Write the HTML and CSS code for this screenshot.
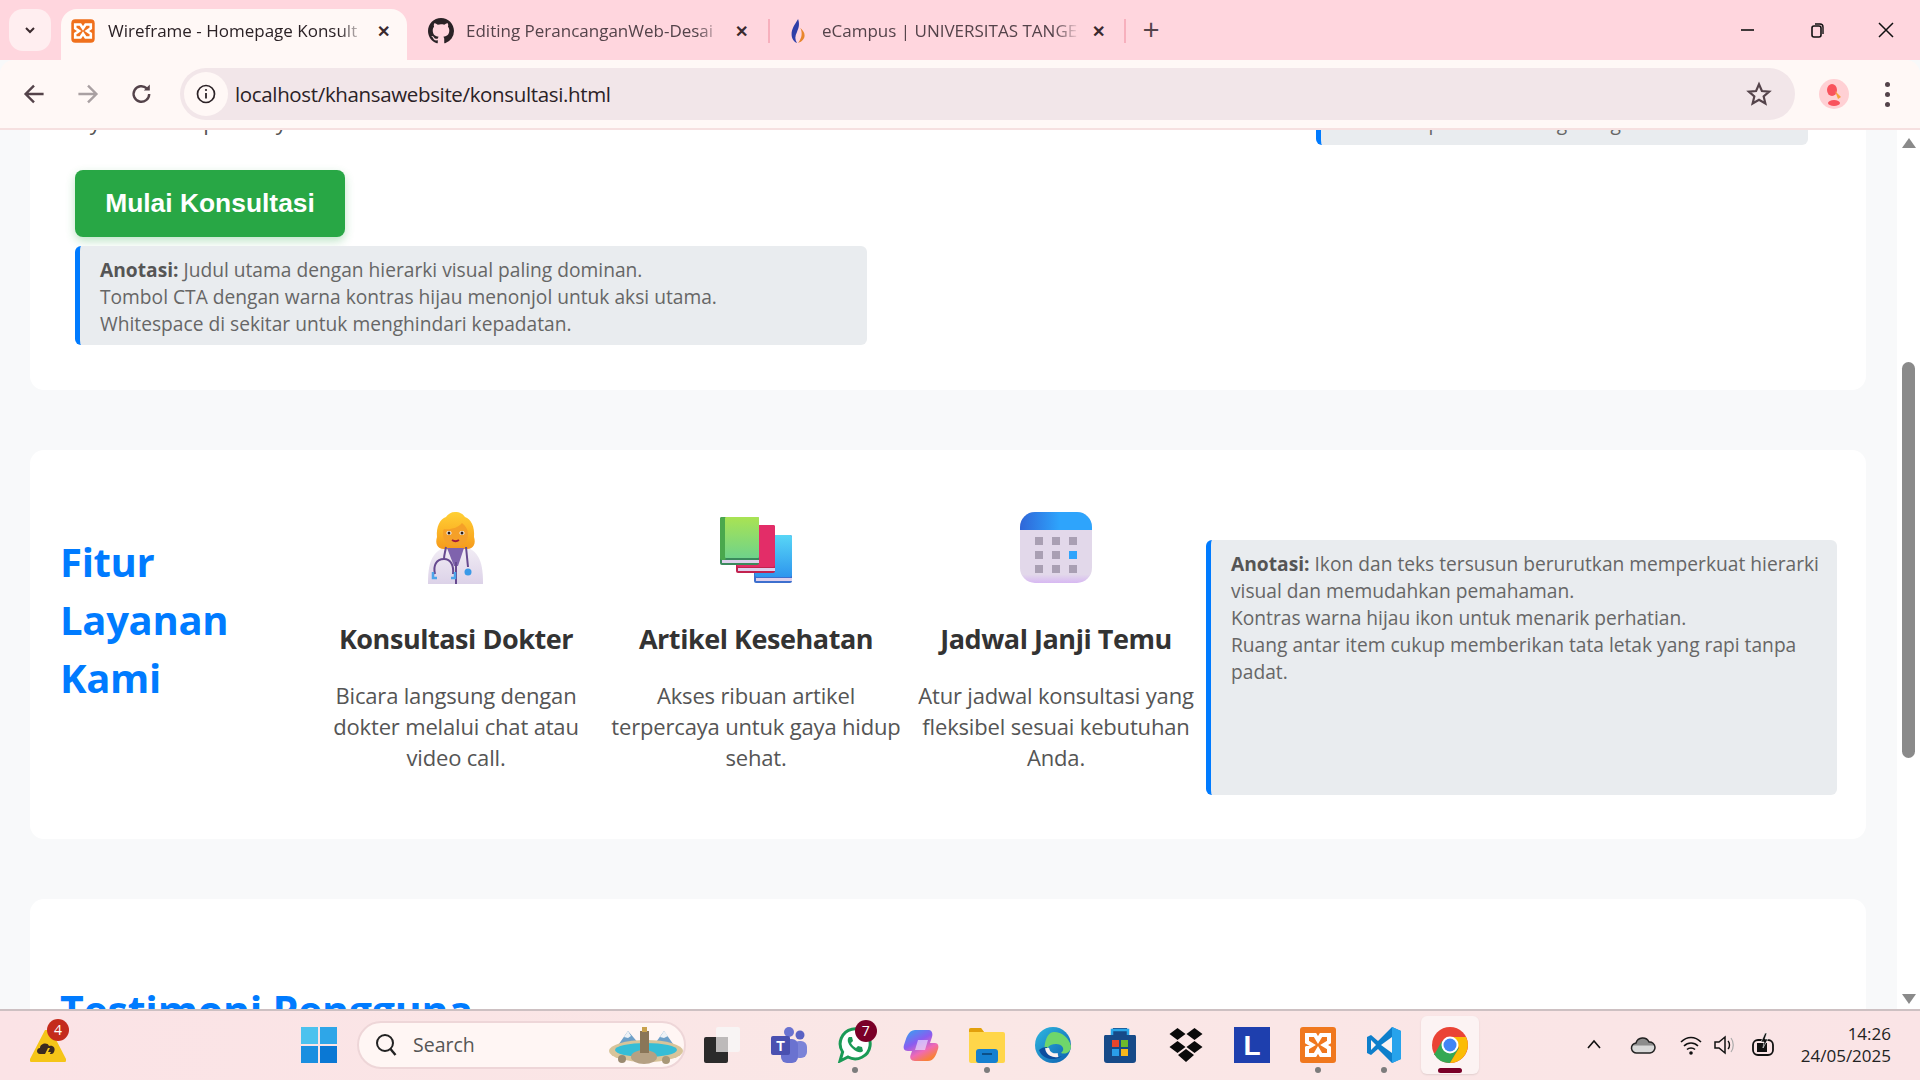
FILE: index.html
```html
<!DOCTYPE html>
<html lang="id">
<head>
  <meta charset="UTF-8">
  <title>Wireframe - Homepage Konsultasi</title>
  <link rel="stylesheet" href="styles.css">
</head>
<body>

<div class="tabstrip">
  <div class="tab-search"><svg width="14" height="14" viewBox="0 0 14 14"><path d="M3 5l4 4 4-4" fill="none" stroke="#3b2a2e" stroke-width="2"/></svg></div>

  <div class="tab tab-active">
    <svg class="favicon" viewBox="0 0 20 20"><rect x="1" y="1" width="18" height="18" rx="3" fill="#f0701c"/><path d="M4 5h4l2 3 2-3h4v3l-3 2 3 2v3h-4l-2-3-2 3H4v-3l3-2-3-2z" fill="none" stroke="#fff" stroke-width="2"/></svg>
    <span class="tab-title">Wireframe - Homepage Konsult</span>
    <span class="tab-close">✕</span>
  </div>
  <div class="tab tab-github">
    <svg class="favicon" viewBox="0 0 16 16"><path fill="#2a2226" d="M8 0C3.58 0 0 3.58 0 8c0 3.54 2.29 6.53 5.47 7.59.4.07.55-.17.55-.38v-1.49c-2.23.48-2.69-.94-2.69-.94-.36-.92-.89-1.17-.89-1.17-.73-.5.05-.49.05-.49.8.06 1.23.83 1.23.83.71 1.22 1.87.87 2.33.66.07-.52.28-.87.51-1.07-1.78-.2-3.64-.89-3.64-3.95 0-.87.31-1.59.82-2.15-.08-.2-.36-1.02.08-2.12 0 0 .67-.21 2.2.82A7.7 7.7 0 0 1 8 3.86c.68 0 1.36.09 2 .27 1.53-1.04 2.2-.82 2.2-.82.44 1.1.16 1.92.08 2.12.51.56.82 1.27.82 2.15 0 3.07-1.87 3.75-3.65 3.95.29.25.54.73.54 1.48v2.2c0 .21.15.46.55.38A8 8 0 0 0 16 8c0-4.42-3.58-8-8-8z"/></svg>
    <span class="tab-title">Editing PerancanganWeb-Desai</span>
    <span class="tab-close">✕</span>
  </div>
  <div class="tab-sep"></div>
  <div class="tab tab-campus">
    <svg class="favicon" viewBox="0 0 20 24"><path d="M11 1C8 6 5 10 5 15c0 4 2 7 5 8-2-3-2-6 0-10 1-3 3-6 1-12z" fill="#2f3fa8"/><path d="M13 9c2 4 2 9-2 14 4-1 6-4 6-7 0-3-2-5-4-7z" fill="#e8862c"/></svg>
    <span class="tab-title">eCampus | UNIVERSITAS TANGE</span>
    <span class="tab-close">✕</span>
  </div>
  <div class="tab-sep"></div>
  <div class="tab-new">+</div>

  <div class="win-controls">
    <svg width="16" height="16" viewBox="0 0 16 16"><path d="M1 8h13" stroke="#111" stroke-width="1.6"/></svg>
    <svg width="16" height="16" viewBox="0 0 16 16"><rect x="3" y="4" width="9" height="11" rx="2" fill="none" stroke="#111" stroke-width="1.6"/><path d="M6 2h5a3 3 0 0 1 3 3v7" fill="none" stroke="#111" stroke-width="1.4"/></svg>
    <svg width="16" height="16" viewBox="0 0 16 16"><path d="M1 1l14 14M15 1L1 15" stroke="#111" stroke-width="1.5"/></svg>
  </div>
</div>

<div class="toolbar">
  <svg class="nav-icon" viewBox="0 0 20 20"><path d="M18 10H3M10 3l-7 7 7 7" fill="none" stroke="#54434a" stroke-width="2"/></svg>
  <svg class="nav-icon" viewBox="0 0 20 20"><path d="M2 10h15M10 3l7 7-7 7" fill="none" stroke="#a9a0a2" stroke-width="2"/></svg>
  <svg class="nav-icon" viewBox="0 0 20 20"><path d="M16 10a6.5 6.5 0 1 1-2-4.7" fill="none" stroke="#54434a" stroke-width="2"/><path d="M16.5 2v5h-5z" fill="#54434a"/></svg>
  <div class="omnibox">
    <div class="site-info"><svg width="20" height="20" viewBox="0 0 20 20"><circle cx="10" cy="10" r="8.5" fill="none" stroke="#2b2226" stroke-width="1.7"/><path d="M10 9v5.5" stroke="#2b2226" stroke-width="1.8"/><circle cx="10" cy="6" r="1.1" fill="#2b2226"/></svg></div>
    <span class="url">localhost/khansawebsite/konsultasi.html</span>
    <svg class="star" viewBox="0 0 24 24"><path d="M12 3l2.7 6.2 6.7.6-5.1 4.4 1.6 6.6L12 17.3l-5.9 3.5 1.6-6.6-5.1-4.4 6.7-.6z" fill="none" stroke="#54434a" stroke-width="2"/></svg>
  </div>
  <div class="avatar"><svg width="30" height="30" viewBox="0 0 30 30"><circle cx="15" cy="15" r="15" fill="#ffd0d4"/><ellipse cx="13" cy="11" rx="5" ry="6" fill="#f9525c"/><path d="M16 12l6 6-3 2z" fill="#f7a13c"/><ellipse cx="15" cy="24" rx="6" ry="3" fill="#f9525c"/></svg></div>
  <div class="menu-dots"><i></i><i></i><i></i></div>
</div>

<div class="viewport">
  <div class="page">
    <section class="card card-hero">
      <div class="hero-row">
        <p class="hero-text">Ayo lakukan pola kaya nutrisi</p>
        <div class="note note-top">Warna isi pada konten agak tegas</div>
      </div>
      <a class="btn-cta">Mulai Konsultasi</a>
      <div class="note note-hero">
        <b>Anotasi:</b> Judul utama dengan hierarki visual paling dominan.<br>
        Tombol CTA dengan warna kontras hijau menonjol untuk aksi utama.<br>
        Whitespace di sekitar untuk menghindari kepadatan.
      </div>
    </section>

    <section class="card card-features">
      <h2 class="features-title">Fitur Layanan Kami</h2>

      <div class="feature">
        <svg class="feature-icon" viewBox="0 0 72 72">
          <defs>
            <linearGradient id="hair" x1="0" y1="0" x2="0" y2="1"><stop offset="0" stop-color="#ffd035"/><stop offset=".6" stop-color="#fbb024"/><stop offset="1" stop-color="#f59a1c"/></linearGradient>
            <linearGradient id="coat" x1="0" y1="0" x2="0" y2="1"><stop offset="0" stop-color="#f2edf5"/><stop offset="1" stop-color="#dcd2e8"/></linearGradient>
          </defs>
          <path d="M8 72c0-20 3-32 18-37h20c14 5 17 17 17 37z" fill="url(#coat)"/>
          <path d="M35 0c5 0 8 2 10 5 6 2 10 10 9 20 2 6 0 12-7 12H24c-7 0-9-6-7-12-1-10 3-18 9-20 2-3 5-5 9-5z" fill="url(#hair)"/>
          <path d="M24 17c6 1 14-1 18-6 4 3 6 7 6 11 0 8-5 12-12 12s-13-4-13-12c0-2 0-4 1-5z" fill="#f5a028"/>
          <ellipse cx="29" cy="21" rx="2.6" ry="2" fill="#fff"/><ellipse cx="42" cy="21" rx="2.6" ry="2" fill="#fff"/>
          <circle cx="29" cy="21" r="1.5" fill="#2b1a14"/><circle cx="42" cy="21" r="1.5" fill="#2b1a14"/>
          <path d="M32 28q3.500 2.500 7 0" fill="none" stroke="#a01a3c" stroke-width="1.8"/>
          <path d="M27 36h17l-6 18h-4z" fill="#7f63ad"/>
          <path d="M36 50v22M26 35c-1 6-2 8-2 12M46 35l2 20" fill="none" stroke="#66498f" stroke-width="2"/>
          <path d="M15 62c-2-8 1-15 9-15 7 0 10 7 9 15" fill="none" stroke="#66498f" stroke-width="2"/>
          <path d="M13 60v6h4M31 66h4v-6" fill="none" stroke="#4ba5ea" stroke-width="2.5"/>
          <circle cx="48" cy="60" r="3.5" fill="#3a9ae8"/>
        </svg>
        <h3>Konsultasi Dokter</h3>
        <p>Bicara langsung dengan dokter melalui chat atau video call.</p>
      </div>

      <div class="feature">
        <svg class="feature-icon" viewBox="0 0 72 72">
          <defs>
            <linearGradient id="bookg" x1="0" y1="0" x2="0" y2="1"><stop offset="0" stop-color="#a9e353"/><stop offset="1" stop-color="#6fd38a"/></linearGradient>
            <linearGradient id="bookb" x1="0" y1="0" x2="0" y2="1"><stop offset="0" stop-color="#58d6f6"/><stop offset="1" stop-color="#2e96ee"/></linearGradient>
          </defs>
          <rect x="34" y="23" width="38" height="48" rx="2" fill="#3d6fce"/>
          <rect x="35" y="23" width="37" height="42" rx="2" fill="url(#bookb)"/>
          <rect x="36" y="66" width="36" height="3" fill="#ded0ec"/>
          <rect x="16" y="13" width="39" height="48" rx="2" fill="#c2224f"/>
          <rect x="17" y="13" width="38" height="42" rx="2" fill="#e32d68"/>
          <rect x="18" y="56" width="37" height="3" fill="#ded0ec"/>
          <rect x="0" y="5" width="39" height="48" rx="2" fill="#3a8a5c"/>
          <rect x="0" y="5" width="6" height="43" rx="2" fill="#4aa84d"/>
          <rect x="5" y="5" width="34" height="41" rx="1" fill="url(#bookg)"/>
          <rect x="2" y="48" width="37" height="3" fill="#ded0ec"/>
        </svg>
        <h3>Artikel Kesehatan</h3>
        <p>Akses ribuan artikel terpercaya untuk gaya hidup sehat.</p>
      </div>

      <div class="feature">
        <svg class="feature-icon" viewBox="0 0 72 72">
          <defs>
            <linearGradient id="calb" x1="0" y1="0" x2="1" y2="0"><stop offset="0" stop-color="#2f66d8"/><stop offset=".55" stop-color="#2ea4fc"/></linearGradient>
            <linearGradient id="calp" x1="0" y1="0" x2="0" y2="1"><stop offset=".88" stop-color="#e2d8ea"/><stop offset="1" stop-color="#d7b8f2"/></linearGradient>
          </defs>
          <rect x="0" y="0" width="72" height="71" rx="15" fill="url(#calp)"/>
          <path d="M0 18V15A15 15 0 0 1 15 0h42a15 15 0 0 1 15 15v3z" fill="url(#calb)"/>
          <g fill="#a99fb3">
            <rect x="15" y="25" width="8" height="8"/><rect x="32" y="25" width="8" height="8"/><rect x="49" y="25" width="8" height="8"/>
            <rect x="15" y="39" width="8" height="8"/><rect x="32" y="39" width="8" height="8"/>
            <rect x="15" y="53" width="8" height="8"/><rect x="32" y="53" width="8" height="8"/><rect x="49" y="53" width="8" height="8"/>
          </g>
          <rect x="49" y="39" width="8" height="8" fill="#2ea4fc"/>
        </svg>
        <h3>Jadwal Janji Temu</h3>
        <p>Atur jadwal konsultasi yang fleksibel sesuai kebutuhan Anda.</p>
      </div>

      <div class="note note-features">
        <b>Anotasi:</b> Ikon dan teks tersusun berurutkan memperkuat hierarki visual dan memudahkan pemahaman.<br>
        Kontras warna hijau ikon untuk menarik perhatian.<br>
        Ruang antar item cukup memberikan tata letak yang rapi tanpa padat.
      </div>
    </section>

    <section class="card card-testi">
      <h2 class="testi-title">Testimoni Pengguna</h2>
    </section>
  </div>
  <div class="scrollbar">
    <span class="sb-arrow sb-up"></span>
    <span class="sb-thumb"></span>
    <span class="sb-arrow sb-down"></span>
  </div>
</div>

<div class="taskbar">
  <div class="weather">
    <svg width="36" height="36" viewBox="0 0 36 36"><path d="M15 3L0 32a2 2 0 0 0 2 3h32a2 2 0 0 0 2-3L21 3z" fill="#f5c518"/><path d="M10 27c-4 0-4-6 0-6 0-5 8-6 9-2 4-1 7 2 5 6-1 2-2 2-4 2z" fill="#3a2a20"/><path d="M18 21l-3 6h3l-2 6 5-8h-3l2-4z" fill="#f5c518"/></svg>
    <span class="badge badge-red">4</span>
  </div>

  <div class="task-center">
    <svg class="task-icon" viewBox="0 0 36 36"><path d="M0 0h17v17H0z" fill="#4cc2ee"/><path d="M19 0h17v17H19z" fill="#2ea6e8"/><path d="M0 19h17v17H0z" fill="#1a8fe0"/><path d="M19 19h17v17H19z" fill="#0a78d4"/></svg>
    <div class="search">
      <svg width="24" height="24" viewBox="0 0 24 24"><circle cx="10" cy="10" r="8" fill="none" stroke="#222" stroke-width="2"/><path d="M15.5 16l5 6" stroke="#222" stroke-width="2.4"/></svg>
      <span>Search</span>
      <svg class="search-art" viewBox="0 0 76 40"><path d="M6 26L20 6l12 14 6-8 8 8 10-14 14 20z" fill="#6ea0c8"/><path d="M20 6l-4 6 4 1 3-2zM56 6l-4 6 4 1 4-2z" fill="#eef2f6"/><ellipse cx="38" cy="26" rx="37" ry="11" fill="#d8c49a"/><ellipse cx="38" cy="25" rx="31" ry="7" fill="#36bdd6"/><ellipse cx="36" cy="32" rx="13" ry="7" fill="#b5a184"/><rect x="32" y="6" width="9" height="22" fill="#8a7658"/><rect x="34" y="2" width="5" height="5" fill="#c9a24e"/><circle cx="14" cy="34" r="4" fill="#9a8a70"/><circle cx="58" cy="35" r="4" fill="#a89878"/></svg>
    </div>
    <div class="task-slot">
      <svg class="task-icon" viewBox="0 0 36 36"><rect x="12" y="0" width="24" height="25" rx="2" fill="#f8f4f4"/><rect x="0" y="10" width="24" height="26" rx="2" fill="#2b2b2b"/><rect x="12" y="10" width="12" height="15" fill="#bdbaba"/></svg>
    </div>
    <div class="task-slot">
      <svg class="task-icon" viewBox="0 0 36 36"><circle cx="29" cy="8" r="4.5" fill="#5a62c4"/><rect x="22" y="14" width="14" height="17" rx="6" fill="#7b83d8"/><circle cx="18" cy="5" r="5" fill="#6a72d0"/><rect x="10" y="12" width="17" height="24" rx="6" fill="#6a72d0"/><rect x="0" y="9" width="19" height="19" rx="2" fill="#4a50b0"/><text class="teams-t" x="9.5" y="24">T</text></svg>
    </div>
    <div class="task-slot">
      <svg class="task-icon" viewBox="0 0 36 36"><path d="M3 34l2.6-9A15 15 0 1 1 11 30z" fill="#fff" stroke="#1a9a56" stroke-width="3"/><path d="M12 10c-2 2-2 6 3 11s9 5 11 3l-1-4-4-1-2 2c-2-1-4-3-5-5l2-2-1-4z" fill="#1a9a56"/></svg>
      <span class="badge badge-dark">7</span>
      <i class="dot"></i>
    </div>
    <div class="task-slot">
      <svg class="task-icon" viewBox="0 0 36 36"><defs><linearGradient id="cop" x1="0" y1="0" x2=".6" y2="1"><stop offset="0" stop-color="#2ea8f0"/><stop offset=".45" stop-color="#8a5cf0"/><stop offset=".75" stop-color="#f06ab4"/><stop offset="1" stop-color="#f8803c"/></linearGradient></defs><path d="M12 3h14c3 0 4 4 3 7l-2 6h5c3 0 4 3 3 6-2 6-4 12-10 12H12c-4 0-6-3-4-7l1-3H5c-4 0-5-3-4-6C3 12 5 3 12 3z" fill="url(#cop)"/><path d="M15 13h10l-3 10H12z" fill="#eadcff" opacity=".7"/></svg>
    </div>
    <div class="task-slot">
      <svg class="task-icon" viewBox="0 0 36 36"><path d="M0 3a2 2 0 0 1 2-2h10l3 4h19a2 2 0 0 1 2 2v27a2 2 0 0 1-2 2H2a2 2 0 0 1-2-2z" fill="#ffd64a"/><path d="M0 3a2 2 0 0 1 2-2h10l3 4H0z" fill="#e2a00c"/><rect x="7" y="22" width="22" height="14" rx="3" fill="#1580d0"/><rect x="13" y="26" width="10" height="2" fill="#0b4f88"/></svg>
      <i class="dot"></i>
    </div>
    <div class="task-slot">
      <svg class="task-icon" viewBox="0 0 36 36"><defs><linearGradient id="edge" x1="0" y1="0" x2="1" y2="1"><stop offset="0" stop-color="#2fb8e0"/><stop offset="1" stop-color="#0c5fb0"/></linearGradient></defs><circle cx="18" cy="18" r="18" fill="url(#edge)"/><path d="M19 5c8 0 15 6 17 14 0 6-5 9-10 7 5-4 1-9-5-9-8 0-12 6-9 13-5-6-2-25 7-25z" fill="#6fd66b"/><path d="M12 20c0 8 8 12 15 9-8 6-20 3-23-6 2-2 5-3 8-3z" fill="#0b4d9e"/><path d="M12 21c1 6 6 8 11 7" fill="none" stroke="#fbf0f0" stroke-width="4"/></svg>
    </div>
    <div class="task-slot">
      <svg class="task-icon" viewBox="0 0 36 36"><path d="M11 1h14l2 7h6a2 2 0 0 1 1 2v23a3 3 0 0 1-3 3H5a3 3 0 0 1-3-3V10a2 2 0 0 1 1-2h6z" fill="#164a88"/><path d="M10 8V3h16v5" fill="none" stroke="#2aa6e8" stroke-width="2.5"/><rect x="10" y="13" width="7" height="7" fill="#e8452c"/><rect x="19" y="13" width="7" height="7" fill="#6ebb2c"/><rect x="10" y="22" width="7" height="7" fill="#2a9ee8"/><rect x="19" y="22" width="7" height="7" fill="#f6b81c"/></svg>
    </div>
    <div class="task-slot">
      <svg class="task-icon" viewBox="0 0 36 36" fill="#0a0a0a"><path d="M9.5 1l8 6-8 6-8-6zM26.5 1l8 6-8 6-8-6zM9.5 14l8 6-8 6-8-6zM26.5 14l8 6-8 6-8-6zM18 22l8 6-8 7-8-7z"/></svg>
    </div>
    <div class="task-slot">
      <svg class="task-icon" viewBox="0 0 36 36"><rect width="36" height="36" fill="#1e3fae"/><text class="lingo-l" x="18" y="28">L</text></svg>
    </div>
    <div class="task-slot">
      <svg class="task-icon" viewBox="0 0 36 36"><rect width="36" height="36" rx="3" fill="#f0781e"/><path d="M7 8h8l3 5 3-5h8v7l-5 3 5 3v7h-8l-3-5-3 5H7v-7l5-3-5-3z" fill="none" stroke="#fff" stroke-width="4"/></svg>
      <i class="dot"></i>
    </div>
    <div class="task-slot">
      <svg class="task-icon" viewBox="0 0 36 36"><path d="M26 0l9 4v28l-9 4-14-14-7 6-4-2V10l4-2 7 6z" fill="#0e7fcb"/><path d="M26 0l9 4v28l-9 4z" fill="#27a3ec"/><path d="M26 10L15 18l11 8z" fill="#fbf4f4"/><path d="M5 13l5 5-5 5z" fill="#fbf4f4"/></svg>
      <i class="dot"></i>
    </div>
    <div class="task-slot task-slot-active">
      <svg class="task-icon" viewBox="0 0 36 36"><circle cx="18" cy="18" r="18" fill="#ea4335"/><path d="M18 18L2 27a18 18 0 0 0 16 9l9-15z" fill="#34a853"/><path d="M18 10h16a18 18 0 0 1-16 26l9-15z" fill="#fbbc05"/><path d="M2 28L10 14l8 8z" fill="#34a853"/><circle cx="18" cy="18" r="8.5" fill="#fff"/><circle cx="18" cy="18" r="6.5" fill="#4285f4"/></svg>
      <i class="bar"></i>
    </div>
  </div>

  <div class="tray">
    <svg class="tray-caret" width="16" height="16" viewBox="0 0 16 16"><path d="M2 11l6-7 6 7" fill="none" stroke="#111" stroke-width="1.6"/></svg>
    <svg class="tray-cloud" width="26" height="20" viewBox="0 0 26 20"><defs><linearGradient id="cloud" x1="0" y1="0" x2="0" y2="1"><stop offset=".45" stop-color="#8c8c8c"/><stop offset=".55" stop-color="#d8d8d8"/></linearGradient></defs><path d="M7 18a5 5 0 0 1-1-10 7 7 0 0 1 13-1 5.5 5.5 0 0 1 1 11z" fill="url(#cloud)" stroke="#222" stroke-width="1.5"/></svg>
    <svg class="tray-wifi" width="24" height="22" viewBox="0 0 24 22"><path d="M2 8c6-6 14-6 20 0M5 12c4-4 10-4 14 0M8 15.5c2-2 6-2 8 0" fill="none" stroke="#111" stroke-width="1.6"/><circle cx="12" cy="19" r="1.8" fill="#111"/></svg>
    <svg class="tray-sound" width="24" height="22" viewBox="0 0 24 22"><path d="M2 8h4l6-5v16l-6-5H2z" fill="none" stroke="#111" stroke-width="1.5"/><path d="M15 7c2 2 2 6 0 8" fill="none" stroke="#111" stroke-width="1.4"/><path d="M18 4c3 4 3 10 0 14" fill="none" stroke="#aaa" stroke-width="1.2"/></svg>
    <svg class="tray-battery" width="24" height="24" viewBox="0 0 24 24"><rect x="2" y="7" width="20" height="15" rx="5" fill="none" stroke="#111" stroke-width="1.8"/><rect x="6" y="10" width="10" height="9" fill="#111"/><path d="M14 0l-4 9h3l-1 6 5-9h-3l2-6z" fill="#111" stroke="#fff" stroke-width=".6"/></svg>
    <div class="clock"><span>14:26</span><span>24/05/2025</span></div>
  </div>
</div>

</body>
</html>
```

FILE: styles.css
```css
* { box-sizing: border-box; }
html, body { margin: 0; height: 100%; overflow: hidden; }
body { width: 1920px; height: 1080px; display: flex; flex-direction: column; font-family: "Open Sans", "Noto Sans", sans-serif; background: #f8f9fa; color: #333; }

/* browser chrome */
.tabstrip { height: 60px; flex: none; background: #ffd6de; display: flex; align-items: flex-start; padding: 9px 0 0 9px; position: relative; font-size: 17px; }
.tab-search { width: 42px; height: 42px; background: #ffeef0; border-radius: 14px; display: flex; align-items: center; justify-content: center; margin-right: 10px; }
.tab { height: 51px; display: flex; align-items: center; color: #54434a; flex: none; }
.tab-active { width: 346px; padding: 0 14px 8px 9px; background: #fff8f6; border-radius: 16px 16px 0 0; color: #2b2226; }
.tab-github { width: 361px; padding: 0 17px 8px 21px; }
.tab-campus { width: 354px; padding: 0 16px 8px 14px; }
.tab-title { flex: 1; min-width: 0; white-space: nowrap; overflow: hidden; margin-left: 12px; -webkit-mask-image: linear-gradient(to right, #000 90%, transparent); mask-image: linear-gradient(to right, #000 90%, transparent); }
.favicon { width: 26px; height: 26px; flex: none; }
.tab-close { width: 20px; margin-left: 8px; font-size: 16px; font-weight: 700; text-align: center; color: #3b2a2e; }
.tab-sep { width: 2px; height: 24px; background: #f7b0bd; margin-top: 10px; flex: none; }
.tab-new { width: 50px; font-size: 30px; line-height: 30px; text-align: center; margin-top: 5px; color: #54434a; }
.win-controls { position: absolute; right: 26px; top: 22px; display: flex; gap: 53px; }

.toolbar { height: 70px; flex: none; background: #fff8f6; border-radius: 14px 14px 0 0; border-bottom: 2px solid #f6e0e0; display: flex; align-items: center; padding: 0 30px 0 22px; gap: 30px; }
.nav-icon { width: 24px; height: 24px; flex: none; }
.omnibox { margin-left: -4px; flex: 1; height: 52px; background: #f2e6e9; border-radius: 26px; display: flex; align-items: center; padding: 0 23px 0 4px; font-size: 20.5px; color: #2b2226; }
.site-info { width: 44px; height: 44px; border-radius: 50%; background: #fff8f6; display: flex; align-items: center; justify-content: center; margin-right: 7px; }
.url { flex: 1; letter-spacing: -.35px; }
.star { width: 26px; height: 26px; }
.avatar { margin-left: -6px; height: 30px; }
.menu-dots { display: flex; flex-direction: column; gap: 5px; margin-left: 6px; width: 5px; }
.menu-dots i { width: 5px; height: 5px; border-radius: 50%; background: #54434a; }

/* page */
.viewport { flex: 1; min-height: 0; position: relative; overflow: hidden; background: #f8f9fa; }
.page { margin-top: -90px; padding: 0 54px 0 30px; }
.card { background: #fff; border-radius: 14px; margin-bottom: 60px; }
.card-hero { padding: 60px 46px 46px 45px; height: 350px; }
.hero-row { display: flex; justify-content: space-between; height: 70px; }
.hero-text { margin: 6px 0 0 1px; font-size: 22px; line-height: 31px; color: #555; letter-spacing: -.2px; }
.note { background: #e9ecef; border-left: 5px solid #007bff; border-radius: 6px; padding: 10px 20px; font-size: 19.2px; line-height: 27px; color: #666; }
.note b { color: #555; }
.note-top { width: 492px; height: 45px; margin-right: 12px; padding-top: 9px; white-space: nowrap; overflow: hidden; }
.btn-cta { display: block; width: 270px; height: 67px; background: #28a745; color: #fff; border-radius: 8px; font: 700 26.4px/67px "Liberation Sans", Arial, sans-serif; text-align: center; box-shadow: 0 4px 10px rgba(40, 167, 69, .3); }
.note-hero { width: 792px; height: 99px; margin-top: 9px; }

.card-features { height: 389px; display: grid; grid-template-columns: 246px 300px 300px 300px 1fr; padding: 0 30px; align-items: start; }
.features-title { margin: 83px 0 0; width: 200px; font-size: 40px; line-height: 58px; color: #007bff; font-weight: 700; letter-spacing: -.3px; }
.feature { text-align: center; padding-top: 62px; }
.feature-icon { display: block; width: 72px; height: 72px; margin: 0 auto; }
.feature h3 { margin: 37px 0 0; font-size: 27px; line-height: 36px; color: #333; font-weight: 700; letter-spacing: -.45px; white-space: nowrap; }
.feature p { margin: 23px 0 0; font-size: 22px; line-height: 31px; color: #555; letter-spacing: -.17px; }
.note-features { width: 631px; height: 255px; margin-top: 90px; padding-right: 8px; }

.card-testi { height: 300px; padding: 84px 30px 0; }
.testi-title { margin: 0; font-size: 41px; line-height: 54px; color: #007bff; font-weight: 700; letter-spacing: -.2px; }

.scrollbar { position: absolute; right: 0; top: 0; width: 23px; height: 100%; background: #fff; }
.sb-thumb { position: absolute; left: 5px; top: 232px; width: 13px; height: 396px; background: #8a8a8a; border-radius: 7px; }
.sb-arrow { position: absolute; left: 5px; width: 0; height: 0; border-left: 7px solid transparent; border-right: 7px solid transparent; }
.sb-up { top: 8px; border-bottom: 10px solid #8a8a8a; }
.sb-down { bottom: 5px; border-top: 10px solid #8a8a8a; }

/* taskbar */
.taskbar { height: 71px; flex: none; border-top: 2px solid #cdc0c2; background: linear-gradient(to right, #fbe3e6, #fae7e6 50%, #fae4e6); display: flex; align-items: center; position: relative; }
.weather { position: absolute; left: 30px; top: 16px; width: 36px; height: 36px; }
.weather svg { display: block; }
.badge { position: absolute; width: 22px; height: 22px; border-radius: 50%; color: #fff; font-size: 14px; line-height: 22px; text-align: center; }
.badge-red { left: 17px; top: -8px; background: #c42b1c; }
.badge-dark { left: 33px; top: 4px; background: #7a0028; }
.task-center { position: absolute; left: 301px; top: 0; height: 67px; display: flex; align-items: center; }
.task-icon { width: 36px; height: 36px; display: block; }
.search { width: 329px; height: 48px; margin-left: 20px; border-radius: 24px; background: #fff6f4; border: 2px solid #eed6d8; display: flex; align-items: center; padding-left: 16px; gap: 14px; font-size: 19.5px; color: #555; position: relative; margin-right: 3.4px; }
.search-art { position: absolute; right: 0; top: 2px; width: 76px; height: 40px; }
.task-slot { width: 66.2px; height: 58px; display: flex; align-items: center; justify-content: center; position: relative; }
.task-slot-active { width: 58px; margin: 0 4px; background: #fcf3f3; border-radius: 6px; box-shadow: 0 1px 2px rgba(0,0,0,.1); }
.dot { position: absolute; bottom: 1px; left: 50%; margin-left: -3px; width: 6px; height: 6px; border-radius: 50%; background: #7c7c7c; }
.bar { position: absolute; bottom: 1px; left: 50%; margin-left: -12px; width: 24px; height: 5px; border-radius: 3px; background: #7a0028; }
.teams-t { font: 700 14px "Liberation Sans", sans-serif; fill: #fff; text-anchor: middle; }
.lingo-l { font: 700 28px "Liberation Sans", sans-serif; fill: #fff; text-anchor: middle; }
.tray { position: absolute; right: 0; top: 0; height: 67px; display: flex; align-items: center; padding-right: 29px; }
.tray-caret { margin-right: 28px; }
.tray-cloud { margin-right: 23px; }
.tray-wifi { margin-right: 10px; }
.tray-sound { margin-right: 14px; }
.tray-battery { margin-right: 26px; }
.clock { display: flex; flex-direction: column; align-items: flex-end; font-size: 17px; line-height: 22px; color: #222; }
```
